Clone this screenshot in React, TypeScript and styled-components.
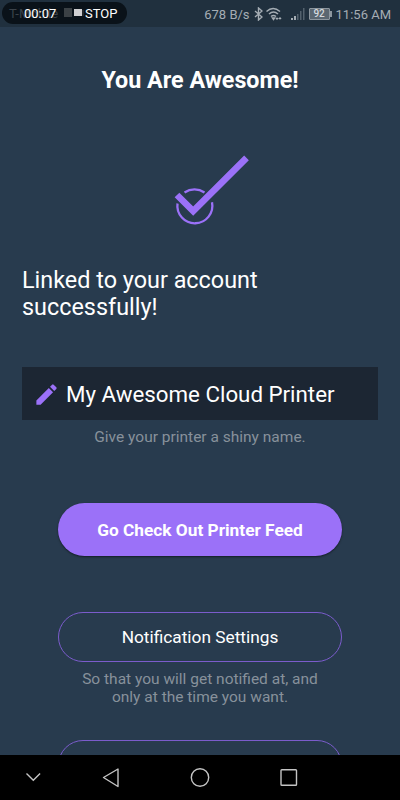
import React from 'react';
import styled, { createGlobalStyle } from 'styled-components';

const GlobalStyle = createGlobalStyle`
  * { box-sizing: border-box; }
  body { margin: 0; background: #283b4e; }
`;

const Screen = styled.div`
  display: flex;
  flex-direction: column;
  width: 400px;
  height: 800px;
  overflow: hidden;
  background: #283b4e;
  color: #fff;
  font-family: Roboto, sans-serif;
`;

const StatusBar = styled.header`
  display: flex;
  flex: 0 0 27px;
  justify-content: space-between;
  align-items: flex-start;
  padding: 2px 9px 0 2px;
  background: #20303e;
`;

const RecorderPill = styled.div`
  position: relative;
  display: flex;
  align-items: center;
  width: 125px;
  height: 22px;
  padding-left: 22px;
  border-radius: 11px;
  background: #0a1219;
  font-size: 13px;
  line-height: 23px;
  white-space: nowrap;
`;

const Carrier = styled.span`
  position: absolute;
  left: 7px;
  top: 0;
  color: #3b434a;
`;

const Elapsed = styled.span`
  position: relative;
  width: 34px;
`;

const Stop = styled.span`
  position: relative;
`;

const RecorderIcon = styled.svg`
  position: relative;
  flex: none;
  margin: 0 1px 0 6px;
`;

const StatusInfo = styled.div`
  display: flex;
  align-items: center;
  height: 24px;
  color: #a5adb4;
  font-size: 13px;
  white-space: nowrap;
`;

const StatusIcon = styled.svg<{ $left: number }>`
  flex: none;
  margin-left: ${p => p.$left}px;
`;

const Battery = styled.span`
  position: relative;
  width: 21px;
  height: 12px;
  margin: 0 6px 0 4px;
  border: 1px solid #8d979f;
  border-radius: 1px;
  background: #5b6771;
  color: #d5dade;
  font-size: 10px;
  font-weight: 500;
  line-height: 10px;
  text-align: center;
  &::after {
    content: '';
    position: absolute;
    right: -3px;
    top: 2px;
    width: 2px;
    height: 6px;
    background: #8d979f;
  }
`;

const Content = styled.main`
  display: flex;
  flex: 0 0 728px;
  flex-direction: column;
  align-items: center;
  padding: 39px 22px 0;
  overflow: hidden;
`;

const Title = styled.h1`
  margin: 0;
  font-size: 23.3px;
  font-weight: 700;
  line-height: 28px;
`;

const Check = styled.svg`
  flex: none;
  margin: 56px 0 36px 24px;
`;

const Message = styled.p`
  align-self: stretch;
  margin: 0 0 46px;
  font-size: 23.4px;
  line-height: 27px;
  width: 270px;
`;

const NameField = styled.div`
  display: flex;
  flex: 0 0 53px;
  align-self: stretch;
  align-items: center;
  gap: 6px;
  padding: 1px 0 0 11px;
  background: #1c2633;
  font-size: 22.3px;
  line-height: 28px;
  white-space: nowrap;
`;

const Hint = styled.p<{ $top: number }>`
  margin: ${p => p.$top}px 0 0;
  color: #87919b;
  font-size: 15.5px;
  line-height: 18px;
  text-align: center;
`;

const PillButton = styled.button<{ $filled?: boolean; $top: number }>`
  flex: 0 0 ${p => (p.$filled ? 53 : 50)}px;
  width: 284px;
  margin: ${p => p.$top}px 0 0;
  padding: 0;
  border: ${p => (p.$filled ? '0' : '1px solid #7b5ccc')};
  border-radius: 27px;
  background: ${p => (p.$filled ? '#9b71f8' : 'transparent')};
  box-shadow: ${p => (p.$filled ? '0 1px 2px rgba(0, 0, 0, 0.5)' : 'none')};
  color: #fff;
  font-family: inherit;
  font-size: 17.3px;
  font-weight: ${p => (p.$filled ? 700 : 400)};
`;

const NavBar = styled.nav`
  flex: 0 0 45px;
  background: #000;
`;

export default function App() {
  return (
    <Screen>
      <GlobalStyle />
      <StatusBar>
        <RecorderPill>
          <Carrier>T-Mobile</Carrier>
          <Elapsed>00:07</Elapsed>
          <RecorderIcon width="20" height="12" viewBox="0 0 20 12">
            <path d="M0 1h8v9H0z" fill="#3b4145" />
            <path d="M18 3h2v6h-2z" fill="#25292d" />
            <path d="M10 2h8v7h-8z" fill="#d0d0d2" />
          </RecorderIcon>
          <Stop>STOP</Stop>
        </RecorderPill>
        <StatusInfo>
          <span>678 B/s</span>
          <StatusIcon $left={4} width="9" height="14" viewBox="0 0 9 14" fill="none" stroke="currentColor" strokeWidth="1.4">
            <path d="M1 4l7 6-3.500 3V1L8 4 1 10" />
          </StatusIcon>
          <StatusIcon $left={3} width="17" height="14" viewBox="0 0 17 14" fill="none" stroke="currentColor" strokeWidth="1.5">
            <path d="M.5 4.500Q7-1.500 14 4.500M3 7q4.500-4 9 0M5 9.500q2.500-2 5 0" />
            <path d="M6.500 11h2l-1 1.500zM10 11l1 1 1-1M13 12l1-1 1 1" />
          </StatusIcon>
          <StatusIcon $left={8} width="14" height="13" viewBox="0 0 14 13">
            <path d="M0 10h2v2H0zM3 8h2v4H3z" fill="#a5adb4" />
            <path d="M6 6h1.500v6H6zM9 3h1.500v9H9zM12 0h1.500v12H12z" fill="#53616d" />
          </StatusIcon>
          <Battery>92</Battery>
          <span>11:56 AM</span>
        </StatusInfo>
      </StatusBar>
      <Content>
        <Title>You Are Awesome!</Title>
        <Check width="76" height="81" viewBox="174 150 76 81" fill="none" stroke="#9b71f8" overflow="visible">
          <path d="M184.500 192.500A18 18 0 0 1 204.500 192.500M177.500 203.500a17.500 17.500 0 1 0 34.500-1.200" strokeWidth="2.300" />
          <path d="M177 195l16.200 16.200L246.500 157.800" strokeWidth="6.600" />
        </Check>
        <Message>Linked to your account successfully!</Message>
        <NameField>
          <svg width="27" height="27" viewBox="0 0 24 24" fill="#9b71f8">
            <path d="M3 17.250V21h3.750L17.810 9.940l-3.750-3.750L3 17.250zM20.710 7.040a1 1 0 0 0 0-1.410l-2.340-2.340a1 1 0 0 0-1.410 0l-1.830 1.830 3.750 3.750 1.830-1.830z" />
          </svg>
          <span>My Awesome Cloud Printer</span>
        </NameField>
        <Hint $top={8}>Give your printer a shiny name.</Hint>
        <PillButton $filled $top={57}>Go Check Out Printer Feed</PillButton>
        <PillButton $top={56}>Notification Settings</PillButton>
        <Hint $top={8}>So that you will get notified at, and<br />only at the time you want.</Hint>
        <PillButton $top={34} aria-label="More settings" />
      </Content>
      <NavBar>
        <svg width="400" height="45" viewBox="0 755 400 45" fill="none" stroke="#c4c4c4" strokeWidth="1.400">
          <path d="M26.500 773.500l6.800 6.800 6.800-6.800" />
          <path d="M118 769v17.500L103.500 777.500z" strokeLinejoin="round" />
          <circle cx="200" cy="777.500" r="8.700" />
          <rect x="281" y="769.700" width="15.500" height="15.500" rx=".8" />
        </svg>
      </NavBar>
    </Screen>
  );
}
